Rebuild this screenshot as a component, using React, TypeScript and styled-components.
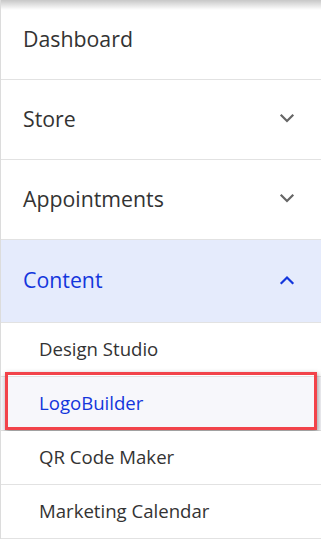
import React from "react";
import styled, { createGlobalStyle } from "styled-components";

const GlobalStyle = createGlobalStyle`
  html, body {
    margin: 0;
    padding: 0;
    background: #fff;
  }
  body {
    font-family: "Open Sans", "Noto Sans", sans-serif;
  }
`;

type Item = { label: string; children?: string[]; open?: boolean };

const items: Item[] = [
  { label: "Dashboard" },
  { label: "Store", children: [] },
  { label: "Appointments", children: [] },
  {
    label: "Content",
    open: true,
    children: ["Design Studio", "LogoBuilder", "QR Code Maker", "Marketing Calendar"],
  },
];

const Chevron = ({ up }: { up?: boolean }) => (
  <svg width="16" height="16" viewBox="0 0 16 16" fill="none">
    <path
      d={up ? "M2.5 11 L8 5.5 L13.5 11" : "M2.5 5.5 L8 11 L13.5 5.5"}
      stroke="currentColor"
      strokeWidth="2.2"
      strokeLinecap="square"
      strokeLinejoin="miter"
    />
  </svg>
);

const App = () => {
  return (
    <>
      <GlobalStyle />
      <Nav>
        {items.map((item) => (
          <React.Fragment key={item.label}>
            <MainRow active={item.open}>
              <span>{item.label}</span>
              {item.children && (
                <ChevronWrap active={item.open}>
                  <Chevron up={item.open} />
                </ChevronWrap>
              )}
            </MainRow>
            {item.open &&
              item.children!.map((child) => (
                <SubRow key={child} selected={child === "LogoBuilder"}>
                  <span>{child}</span>
                  {child === "LogoBuilder" && <Highlight />}
                </SubRow>
              ))}
          </React.Fragment>
        ))}
      </Nav>
    </>
  );
};

export default App;

const Nav = styled.nav`
  position: relative;
  width: 321px;
  height: 539px;
  box-sizing: border-box;
  border-left: 1px solid #dcdcdc;
  overflow: hidden;
  display: flex;
  flex-direction: column;

  &::before {
    content: "";
    position: absolute;
    top: 0;
    left: 0;
    right: 0;
    height: 10px;
    background: linear-gradient(rgba(0, 0, 0, 0.22), rgba(0, 0, 0, 0));
    z-index: 3;
    pointer-events: none;
  }
`;

const MainRow = styled.div.withConfig({
  shouldForwardProp: (prop) => prop !== "active",
})<{ active?: boolean }>`
  display: flex;
  align-items: center;
  justify-content: space-between;
  height: ${({ active }) => (active ? "83px" : "80px")};
  flex-shrink: 0;
  box-sizing: border-box;
  padding: 0 26px 0 22px;
  border-bottom: 1px solid #e2e2e2;
  font-size: 21.3px;
  color: ${({ active }) => (active ? "#1336dc" : "#333333")};
  background: ${({ active }) => (active ? "#e5ebfc" : "#ffffff")};

  span {
    margin-top: -3px;
  }
`;

const ChevronWrap = styled.span.withConfig({
  shouldForwardProp: (prop) => prop !== "active",
})<{ active?: boolean }>`
  display: flex;
  color: ${({ active }) => (active ? "#1336dc" : "#666666")};
`;

const SubRow = styled.div.withConfig({
  shouldForwardProp: (prop) => prop !== "selected",
})<{ selected?: boolean }>`
  position: relative;
  display: flex;
  align-items: center;
  height: 54px;
  flex-shrink: 0;
  box-sizing: border-box;
  padding-left: 38px;
  border-bottom: 1px solid #e2e2e2;
  font-size: 18.6px;
  color: ${({ selected }) => (selected ? "#1336dc" : "#333333")};
  background: ${({ selected }) => (selected ? "#f7f7fb" : "#ffffff")};

  span {
    margin-top: -2px;
  }
`;

const Highlight = styled.div`
  position: absolute;
  left: 4px;
  right: 4px;
  top: -5px;
  bottom: 0;
  border: 3px solid #f2434a;
  box-shadow: 1px 2px 5px rgba(0, 0, 0, 0.4);
  pointer-events: none;
`;
